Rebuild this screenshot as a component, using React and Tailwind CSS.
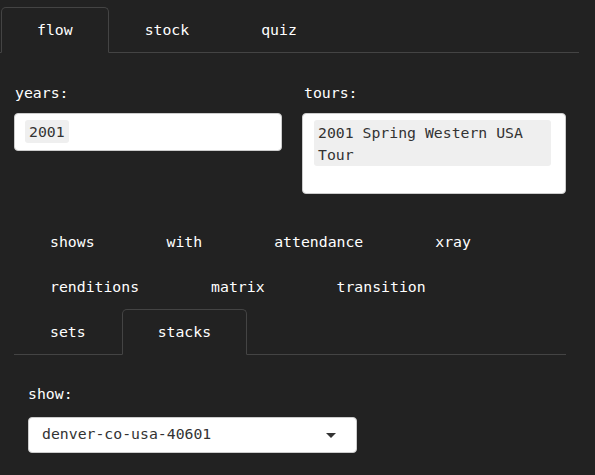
const TOP_TABS = ['flow', 'stock', 'quiz'];
const FLOW_TABS = ['shows', 'with', 'attendance', 'xray', 'renditions', 'matrix', 'transition', 'sets', 'stacks'];

const mono = "font-['DejaVu_Sans_Mono',monospace]";

export default function App() {
  const activeTop = 'flow';
  const activeFlow = 'stacks';

  return (
    <main className={`min-h-[475px] bg-[#222222] text-white text-[14.8px] ${mono}`}>
      <div className="pt-[7px] w-[579px]">
        <ul className="flex border-b border-[#444444]">
          {TOP_TABS.map((tab) => (
            <li
              key={tab}
              className={`-mb-px h-[46px] flex items-center px-[35px] border rounded-t-[5px] ${tab === activeTop ? 'ml-px border-[#444444] border-b-[#222222]' : 'border-transparent'}`}
            >
              {tab}
            </li>
          ))}
        </ul>
      </div>

      <div className="pl-[14px] pt-[30px] grid grid-cols-[268px_264px] gap-x-[20px] items-start">
        <div>
          <label className="block leading-[20px] pl-px mb-[10px]">years:</label>
          <div className="bg-white border border-[#cccccc] rounded-[4px] pt-[6px] pb-[7px] px-[10px]">
            <span className="inline-block bg-[#efefef] text-[#333333] leading-[22px] pt-px -mb-px px-[4px] rounded-[3px]">2001</span>
          </div>
        </div>
        <div>
          <label className="block leading-[20px] pl-[2px] mb-[10px]">tours:</label>
          <div className="bg-white border border-[#cccccc] rounded-[4px] pt-[6px] pb-[6px] pl-[11px] pr-[14px]">
            <div className="bg-[#efefef] text-[#333333] leading-[22px] px-[4px] pt-[2px] rounded-[3px]">
              2001 Spring Western USA Tour
            </div>
            <div className="h-[21px]" />
          </div>
        </div>
      </div>

      <div className="mt-[25px] ml-[14px] w-[552px]">
        <ul className="flex flex-wrap border-b border-[#444444]">
          {FLOW_TABS.map((tab) => (
            <li
              key={tab}
              className={`-mb-px h-[46px] flex items-center px-[35px] border rounded-t-[5px] ${tab === activeFlow ? 'border-[#444444] border-b-[#222222]' : 'border-transparent'}`}
            >
              {tab}
            </li>
          ))}
        </ul>

        <div className="pl-[14px] pt-[29px]">
          <label className="block leading-[20px] mb-[13px]">show:</label>
          <div className="w-[329px] h-[36px] bg-white border border-[#cccccc] rounded-[4px] flex items-center justify-between pl-[13px] pr-[20px] text-[#333333]">
            <span className="-mt-px">denver-co-usa-40601</span>
            <svg width="10" height="5" viewBox="0 0 10 5">
              <path d="M0 0h10L5 5z" fill="#333333" />
            </svg>
          </div>
        </div>
      </div>
    </main>
  );
}
